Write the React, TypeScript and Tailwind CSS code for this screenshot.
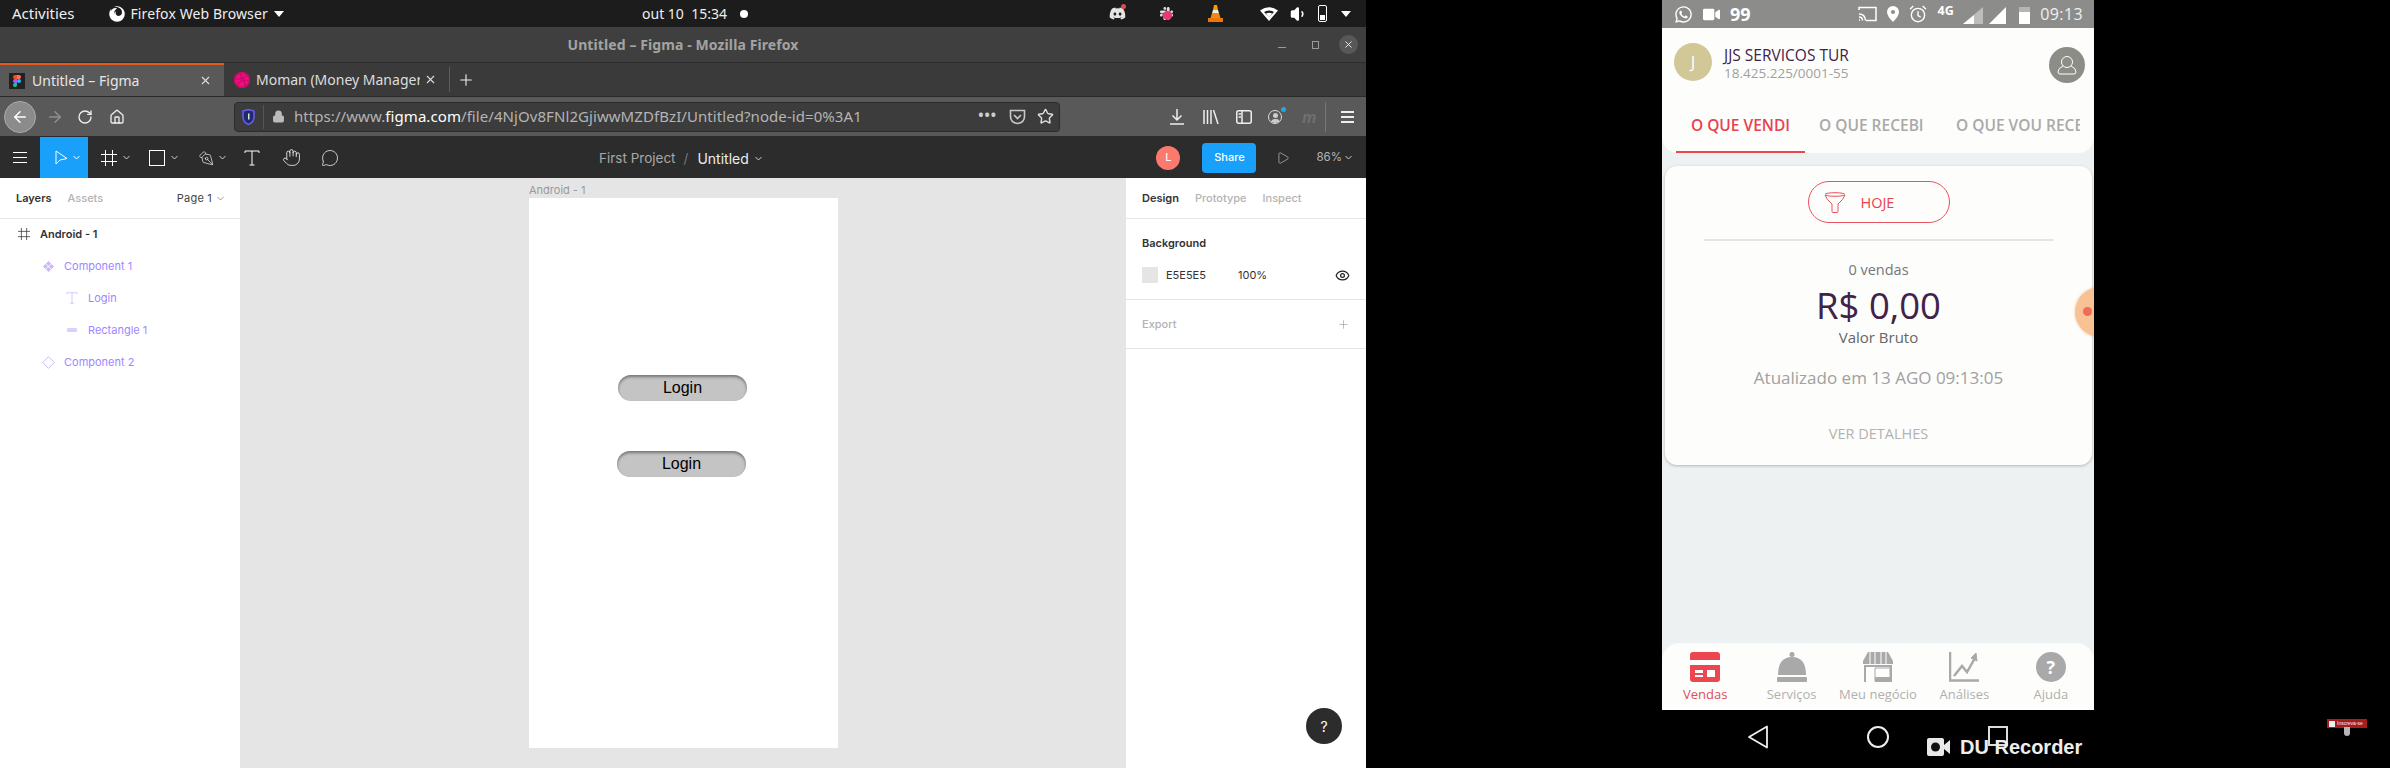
import React from "react";
import { ArrowLeft, ArrowRight, RotateCw, Home, Lock, Star, Hand, MessageCircle, PenTool, X, Plus, Eye, Play, Volume1 } from "lucide-react";
import { FaDiscord, FaSlack, FaFirefox, FaDribbble, FaWhatsapp, FaVideo } from "react-icons/fa";

const FrameIcon = ({ c = "#fff", s = 16 }: { c?: string; s?: number }) => (
  <svg width={s} height={s} viewBox="0 0 16 16" fill="none" stroke={c} strokeWidth="1">
    <path d="M4.5 0v16M11.5 0v16M0 4.5h16M0 11.5h16" />
  </svg>
);
const TIcon = ({ c = "#fff", s = 16 }: { c?: string; s?: number }) => (
  <svg width={s} height={s} viewBox="0 0 16 16" fill="none" stroke={c} strokeWidth="1">
    <path d="M1 3V1h14v2M8 1v14M5.5 15h5" />
  </svg>
);
const Chev = ({ c = "#ccc" }: { c?: string }) => (
  <svg width="7" height="5" viewBox="0 0 7 5" fill="none" stroke={c} strokeWidth="1"><path d="M.5 1 3.5 4l3-3" /></svg>
);
const Tri = () => <span className="block w-0 h-0 border-x-[5px] border-x-transparent border-t-[6px] border-t-white" />;

function TopBar() {
  return (
    <div className="h-[27px] bg-[#1c1c1c] text-[#eeeeee] text-[14px] grid grid-cols-[1fr_auto_1fr] items-center relative">
      <div className="flex items-center pl-3">
        <span className="text-[15px]">Activities</span>
        <FaFirefox className="ml-[34px] text-white" size={16} />
        <span className="ml-[6px] tracking-[0.1px]">Firefox Web Browser</span>
        <span className="ml-[6px]"><Tri /></span>
      </div>
      <div className="flex items-center pl-[24px]">
        <span>out 10&nbsp;&nbsp;15:34</span>
        <span className="ml-[13px] w-2 h-2 rounded-full bg-white" />
      </div>
      <div className="flex items-center justify-end pr-[15px]">
        <span className="relative"><FaDiscord size={17} className="text-[#e4e4e4]" /><span className="absolute -top-[1px] right-0 w-[5px] h-[5px] rounded-full bg-[#e5484d]" /></span>
        <span className="relative ml-[33px]"><FaSlack size={15} className="text-[#dddddd]" /><span className="absolute top-[5px] left-[4px] w-[9px] h-[9px] rounded-full bg-[#f0347a]" /></span>
        <svg className="ml-[34px]" width="15" height="18" viewBox="0 0 15 18">
          <path d="M6 0h3l1 5H5z" fill="#f90" /><path d="M5 5h5l1 3H4z" fill="#eee" /><path d="M4 8h7l1.5 5h-10z" fill="#f58a0b" /><path d="M0 13h15v4H0z" fill="#e9780a" />
        </svg>
        <svg className="ml-[37px]" width="18" height="14" viewBox="0 0 18 14"><path d="M0 3.5Q9-3 18 3.5L9 14z" fill="#fff" /><path d="M4 5q5-3 10 0l-5 5z" fill="#1c1c1c" /><path d="M6 6.5q3-1.5 6 0L9 10.5z" fill="#fff" /></svg>
        <Volume1 className="ml-[12px]" size={18} fill="#fff" color="#fff" />
        <span className="ml-[10px] relative w-[9px] h-[17px] border border-white rounded-[2px] flex items-end p-[1px]"><span className="block w-full h-[5px] bg-white" /></span>
        <span className="ml-[14px]"><Tri /></span>
      </div>
    </div>
  );
}

function TitleBar() {
  return (
    <div className="h-[36px] bg-[#3f3f3f] border-b border-[#2b2b2b] grid grid-cols-[1fr_auto_1fr] items-center">
      <span />
      <span className="text-[14px] font-bold text-[#a3a3a3] tracking-[0.1px]">Untitled – Figma - Mozilla Firefox</span>
      <div className="flex items-center justify-end pr-[8px] text-[#9a9a9a]">
        <span className="block w-2 h-[1px] bg-[#9a9a9a] mt-[5px]" />
        <span className="ml-[26px] block w-[7px] h-[8px] border border-[#9a9a9a]" />
        <span className="ml-[20px] w-[19px] h-[19px] rounded-full bg-[#585858] flex items-center justify-center"><X size={11} color="#eee" /></span>
      </div>
    </div>
  );
}

function Tabs() {
  return (
    <div className="h-[34px] bg-[#3a3a3a] flex items-stretch border-b border-[#2a2a2a] text-[14px]">
      <div className="w-[224px] bg-[#595959] border-t-2 border-[#e55b1f] flex items-center pl-[9px] pr-[12px] text-[#e6e6e6]">
        <span className="w-4 h-4 bg-[#222] flex items-center justify-center">
          <svg width="8" height="12" viewBox="0 0 8 12"><path d="M0 2a2 2 0 0 1 2-2h2v4H2a2 2 0 0 1-2-2z" fill="#f24e1e" /><path d="M4 0h2a2 2 0 0 1 0 4H4z" fill="#ff7262" /><path d="M0 6a2 2 0 0 1 2-2h2v4H2a2 2 0 0 1-2-2z" fill="#a259ff" /><circle cx="6" cy="6" r="2" fill="#1abcfe" /><path d="M0 10a2 2 0 0 1 2-2h2v2a2 2 0 0 1-4 0z" fill="#0acf83" /></svg>
        </span>
        <span className="ml-[7px] flex-1">Untitled – Figma</span>
        <X size={13} color="#ddd" />
      </div>
      <div className="w-[226px] flex items-center pl-[10px] pr-[11px] text-[#dddddd] border-r border-[#5d5d5d] my-1">
        <span className="w-4 h-4 rounded-full bg-[#ee0f7f] shrink-0"><FaDribbble size={16} color="#c40a66" /></span>
        <span className="ml-[6px] w-[164px] overflow-hidden whitespace-nowrap">Moman (Money Manager</span>
        <X size={13} color="#ddd" className="ml-[4px]" />
      </div>
      <Plus size={18} color="#eee" strokeWidth={1.5} className="self-center ml-[7px]" />
    </div>
  );
}

function NavBar() {
  return (
    <div className="h-[40px] bg-[#595959] border-b border-[#2a2a2a] flex items-center">
      <div className="ml-1 w-8 h-8 rounded-full bg-[#8b8b8b] border border-[#aaa] flex items-center justify-center"><ArrowLeft size={18} color="#fff" /></div>
      <ArrowRight size={18} color="#8f8f8f" className="ml-[10px]" />
      <RotateCw size={16} color="#eee" className="ml-[13px]" />
      <Home size={16} color="#eee" className="ml-[16px]" />
      <div className="ml-[109px] w-[826px] h-[30px] bg-[#3c3c3c] rounded-[4px] border border-[#2c2c2c] flex items-center text-[15px] text-[#b4b4b4] tracking-[0.07px]">
        <svg className="ml-[7px]" width="13" height="16" viewBox="0 0 13 16"><path d="M1 2 6.5.5 12 2v6q0 5-5.500 7.500Q1 13 1 8z" fill="#1e2a6e" stroke="#6a5cf0" strokeWidth="1.5" /><path d="M6 4.500h1.500v6H6z" fill="#ddd" /></svg>
        <span className="ml-[8px] w-[1px] h-[24px] bg-[#555]" />
        <Lock size={13} color="#bbb" fill="#bbb" className="ml-[8px]" />
        <span className="ml-[9px] flex-1 whitespace-nowrap overflow-hidden">https://www.<span className="text-white">figma.com</span>/file/4NjOv8FNl2GjiwwMZDfBzI/Untitled?node-id=0%3A1</span>
        <span className="text-[14px] font-bold tracking-[1px] text-[#ccc] mr-[12px] leading-none mb-[4px]">•••</span>
        <svg width="17" height="16" viewBox="0 0 17 16" fill="none" stroke="#c8c8c8" strokeWidth="1.6" className="mr-[11px]"><path d="M1.500 1.500h14v6q0 6-7 7-7-1-7-7z" /><path d="m5 6 3.500 3.500L12 6" /></svg>
        <Star size={17} color="#ddd" className="mr-[5px]" />
      </div>
      <svg className="ml-[110px]" width="14" height="16" viewBox="0 0 14 16" fill="none" stroke="#eee" strokeWidth="1.5"><path d="M7 0v11M2.500 6.500 7 11l4.500-4.500M0 15h14" /></svg>
      <svg className="ml-[19px]" width="16" height="14" viewBox="0 0 16 14" fill="none" stroke="#eee" strokeWidth="1.5"><path d="M1 0v14M4.500 0v14M8 0v14M10.500 0l4.500 14" /></svg>
      <svg className="ml-[17px]" width="16" height="14" viewBox="0 0 16 14" fill="none" stroke="#eee" strokeWidth="1.5"><rect x=".75" y=".75" width="14.5" height="12.5" rx="2" /><path d="M6 1v12M2.500 4H5M2.500 7H5" /></svg>
      <span className="ml-[16px] relative w-[14px] h-[14px] rounded-full border border-[#ddd] flex items-end justify-center overflow-hidden">
        <span className="absolute top-[2px] w-[5px] h-[5px] rounded-full bg-[#ccc]" />
        <span className="block w-[9px] h-[4px] rounded-t-full bg-[#ccc]" />
      </span>
      <span className="relative -top-[7px] -ml-[1px] w-[5px] h-[5px] rounded-full bg-[#20a8e8]" />
      <span className="ml-[16px] w-[12px] text-[16px] italic font-bold text-[#6f6f6f] leading-none">m</span>
      <span className="ml-[11px] w-[1px] h-[30px] bg-[#777]" />
      <span className="ml-[15px] flex flex-col gap-[3px]"><i className="block w-[13px] h-[2px] bg-[#eee]" /><i className="block w-[13px] h-[2px] bg-[#eee]" /><i className="block w-[13px] h-[2px] bg-[#eee]" /></span>
    </div>
  );
}

function FigmaBar() {
  return (
    <div className="h-[41px] bg-[#2c2c2c] flex items-stretch font-['Inter',sans-serif] text-white">
      <div className="w-[40px] flex items-center justify-center"><span className="flex flex-col gap-[4px]"><i className="block w-[14px] h-[1px] bg-white" /><i className="block w-[14px] h-[1px] bg-white" /><i className="block w-[14px] h-[1px] bg-white" /></span></div>
      <div className="w-[48px] bg-[#18a0fb] flex items-center pl-[15px] gap-[5px]">
        <svg width="13" height="15" viewBox="0 0 13 15" fill="none" stroke="#fff"><path d="M1 1v13l4-4 7-1.500z" /></svg><Chev c="#fff" />
      </div>
      <div className="flex items-center ml-[13px] gap-[6px]"><FrameIcon /><Chev /></div>
      <div className="flex items-center ml-[19px] gap-[6px]"><span className="block w-4 h-4 border border-white" /><Chev /></div>
      <div className="flex items-center ml-[20px] gap-[5px]"><PenTool size={16} strokeWidth={1} className="rotate-180" /><Chev /></div>
      <div className="flex items-center ml-[18px]"><TIcon /></div>
      <div className="flex items-center ml-[22px]"><Hand size={19} strokeWidth={1} /></div>
      <div className="flex items-center ml-[20px]"><MessageCircle size={18} strokeWidth={1} /></div>
      <div className="flex items-center ml-[260px] pt-[1px] text-[13.5px] text-[#a8a8a8]">
        <span>First Project</span>
        <span className="ml-[8px] text-[#777]">/</span>
        <span className="ml-[9px] text-[#ececec] text-[14px]">Untitled</span>
        <span className="ml-[6px]"><Chev /></span>
      </div>
      <div className="flex-1 flex items-center justify-end pr-[14px]">
        <span className="w-6 h-6 rounded-full bg-[#fc7a6d] text-[11px] flex items-center justify-center">L</span>
        <span className="ml-[22px] w-[54px] h-[30px] rounded-[4px] bg-[#18a0fb] text-[11px] font-medium flex items-center justify-center">Share</span>
        <Play size={14} strokeWidth={1} color="#ddd" className="ml-[20px]" />
        <span className="ml-[26px] text-[11.5px] text-[#b5b5b5]">86%</span>
        <span className="ml-[3px]"><Chev /></span>
      </div>
    </div>
  );
}

function LayerRow({ icon, label, pad, dark }: { icon: React.ReactNode; label: string; pad: string; dark?: boolean }) {
  return (
    <div className={`h-[32px] flex items-center ${pad}`}>
      <span className="w-4 h-4 flex items-center justify-center">{icon}</span>
      <span className={dark ? "ml-2 font-semibold text-[#333]" : "ml-2 text-[#9f86ff]"}>{label}</span>
    </div>
  );
}

function LeftPanel() {
  return (
    <aside className="w-[240px] bg-white shrink-0 text-[11px] font-['Inter',sans-serif]">
      <div className="h-[41px] border-b border-[#e5e5e5] flex items-center pl-4 pr-[16px]">
        <span className="font-semibold text-[#333]">Layers</span>
        <span className="ml-4 font-medium text-[#b3b3b3]">Assets</span>
        <span className="ml-auto text-[#444] tracking-[0.2px]">Page 1</span>
        <span className="ml-[5px]"><Chev c="#999" /></span>
      </div>
      <div className="-mt-[1px]">
        <LayerRow pad="pl-[16px]" dark label="Android - 1" icon={<FrameIcon c="#333" s={12} />} />
        <LayerRow pad="pl-[40px]" label="Component 1" icon={<svg width="11" height="11" viewBox="0 0 11 11" fill="#cdb5ff"><path d="M5.500 0 8 2.500 5.500 5 3 2.500zM5.500 6 8 8.500 5.500 11 3 8.500zM2.500 3 5 5.500 2.500 8 0 5.500zM8.500 3 11 5.500 8.500 8 6 5.500z" /></svg>} />
        <LayerRow pad="pl-[64px]" label="Login" icon={<TIcon c="#cdb5ff" s={12} />} />
        <LayerRow pad="pl-[64px]" label="Rectangle 1" icon={<span className="block w-[10px] h-[4px] bg-[#dccfff] rounded-[1px]" />} />
        <LayerRow pad="pl-[40px]" label="Component 2" icon={<svg width="13" height="13" viewBox="0 0 13 13" fill="none" stroke="#cdb5ff"><path d="M6.500.7 12.300 6.500 6.500 12.300.7 6.500z" /></svg>} />
      </div>
    </aside>
  );
}

function LoginBtn({ ml }: { ml: string }) {
  return (
    <div className={`${ml} w-[129px] h-[26px] rounded-[13px] bg-[#c4c4c4] shadow-[inset_0_2px_3px_rgba(0,0,0,0.4)] flex items-center justify-center text-[16px] text-black font-['Liberation_Sans',sans-serif]`}>Login</div>
  );
}

function Canvas() {
  return (
    <main className="flex-1 bg-[#e5e5e5] pl-[289px] pt-[6px]">
      <div className="h-[14px] text-[11px] leading-[13px] text-[#9a9a9a] font-['Inter',sans-serif]">Android - 1</div>
      <div className="w-[309px] h-[550px] bg-white pt-[177px]">
        <LoginBtn ml="ml-[89px]" />
        <div className="h-[50px]" />
        <LoginBtn ml="ml-[88px]" />
      </div>
    </main>
  );
}

function RightPanel() {
  return (
    <aside className="w-[240px] bg-white shrink-0 text-[11px] font-['Inter',sans-serif] text-[#333]">
      <div className="h-[41px] border-b border-[#e5e5e5] flex items-center pl-4 gap-4">
        <span className="font-semibold">Design</span>
        <span className="font-medium text-[#b3b3b3]">Prototype</span>
        <span className="font-medium text-[#b3b3b3]">Inspect</span>
      </div>
      <div className="h-[81px] border-b border-[#e5e5e5] pl-4 pr-4">
        <div className="h-[48px] flex items-center font-semibold">Background</div>
        <div className="flex items-center h-4">
          <span className="w-4 h-4 bg-[#e5e5e5]" />
          <span className="ml-2 w-[72px]">E5E5E5</span>
          <span>100%</span>
          <Eye size={15} className="ml-auto" color="#222" />
        </div>
      </div>
      <div className="h-[49px] border-b border-[#e5e5e5] pl-4 pr-4 flex items-center justify-between">
        <span className="font-medium text-[#b3b3b3]">Export</span>
        <Plus size={13} strokeWidth={1} color="#888" />
      </div>
    </aside>
  );
}

function Desktop() {
  return (
    <section className="w-[1366px] h-[768px] shrink-0 flex flex-col font-['Noto_Sans',sans-serif]">
      <TopBar />
      <TitleBar />
      <Tabs />
      <NavBar />
      <FigmaBar />
      <div className="flex-1 flex min-h-0 overflow-hidden relative">
        <LeftPanel />
        <Canvas />
        <RightPanel />
        <div className="absolute right-[24px] bottom-[24px] w-9 h-9 rounded-full bg-[#2c2c2c] text-white text-[14px] flex items-center justify-center font-['Inter',sans-serif]">?</div>
      </div>
    </section>
  );
}

function PhoneStatus() {
  return (
    <div className="h-[28px] bg-[#8c8d8b] flex items-center text-white pl-[12px] pr-[11px]">
      <FaWhatsapp size={19} />
      <FaVideo size={17} className="ml-[10px]" />
      <span className="ml-[10px] font-bold text-[18px] leading-none">99</span>
      <svg className="ml-[107px]" width="19" height="16" viewBox="0 0 19 16" fill="none" stroke="#fff" strokeWidth="1.5"><path d="M1 4V1.500h17v13H8M1 8q6 0 6.500 6.500M1 11q3.500 0 3.500 3.500M1 14h1" /></svg>
      <svg className="ml-[10px]" width="12" height="16" viewBox="0 0 12 16"><path d="M6 0a6 6 0 0 1 6 6q0 4-6 10Q0 10 0 6a6 6 0 0 1 6-6z" fill="#fff" /><circle cx="6" cy="6" r="2" fill="#8c8d8b" /></svg>
      <svg className="ml-[10px]" width="18" height="18" viewBox="0 0 17 17" fill="none" stroke="#fff" strokeWidth="1.3"><circle cx="8.500" cy="9.500" r="6.300" /><path d="M8.500 6v4l2.500 1.500M1 4l3-3M16 4l-3-3" /></svg>
      <span className="ml-[11px] w-[18px] text-[12.5px] font-bold leading-none -mt-[6px]">4G</span>
      <svg className="ml-[7px] mt-[3px]" width="20" height="17" viewBox="0 0 20 17"><path d="M20 0v17H0z" fill="#bdbdbb" /><path d="M11 8v9H0z" fill="#fff" /></svg>
      <svg className="ml-[6px] mt-[3px]" width="17" height="17" viewBox="0 0 17 17"><path d="M17 0v17H0z" fill="#fff" /></svg>
      <span className="ml-[13px] relative w-[11px] h-[17px] mt-[2px] bg-[#b5b5b3] flex items-end"><span className="block w-full h-[12px] bg-white" /></span>
      <span className="ml-auto text-[16px] tracking-[0.4px] text-[#f0f0f0]">09:13</span>
    </div>
  );
}

function NavItem({ icon, label, active }: { icon: React.ReactNode; label: string; active?: boolean }) {
  return (
    <div className="flex flex-col items-center">
      <div className="h-[30px] flex items-center justify-center">{icon}</div>
      <span className={`mt-[3px] text-[13px] leading-[18px] ${active ? "text-[#df4b58] font-medium" : "text-[#b0b0b0]"}`}>{label}</span>
    </div>
  );
}

function Phone() {
  return (
    <section className="w-[432px] ml-[296px] h-[768px] shrink-0 flex flex-col relative font-['Open_Sans',sans-serif]">
      <PhoneStatus />
      <div className="h-[682px] bg-[#eef1f1] flex flex-col relative overflow-hidden">
        <header className="h-[125px] bg-[#fdfdfc] rounded-b-[16px]">
          <div className="flex items-center h-[70px] pl-[12px] pr-[9px]">
            <span className="w-[38px] h-[38px] rounded-full bg-[#d2c796] text-white text-[17px] flex items-center justify-center -mt-[2px]">J</span>
            <div className="ml-[12px]">
              <div className="text-[15.5px] leading-[20px] text-[#41224a]">JJS SERVICOS TUR</div>
              <div className="text-[13.5px] leading-[17px] text-[#a0a0a0]">18.425.225/0001-55</div>
            </div>
            <span className="ml-auto w-9 h-9 rounded-full bg-[#8c8d86] flex items-center justify-center mt-[4px]">
              <svg width="20" height="20" viewBox="0 0 20 20" fill="none" stroke="#fff" strokeWidth="1"><circle cx="10" cy="7" r="5.5" /><path d="M6 11q-5 2-5 6 0 2 2 2h14q2 0 2-2 0-4-5-6" /></svg>
            </span>
          </div>
          <div className="flex items-stretch h-[55px] pl-[14px] pr-[14px] text-[15.5px] font-semibold text-[#a9a9a9] whitespace-nowrap overflow-hidden">
            <div className="w-[129px] border-b-[2px] border-[#ec4650] text-[#e8424f] flex items-center justify-center pt-[2px]">O QUE VENDI</div>
            <div className="ml-[14px] w-[107px] overflow-hidden flex items-center">O QUE RECEBI</div>
            <div className="ml-[30px] w-[124px] overflow-hidden flex items-center">O QUE VOU RECEBER</div>
          </div>
        </header>
        <div className="mt-[13px] ml-[3px] mr-[2px] h-[299px] bg-[#fdfdfc] rounded-[12px] shadow-[0_1px_3px_rgba(0,0,0,0.25)] flex flex-col items-center">
          <div className="mt-[15px] w-[142px] h-[42px] rounded-full border border-[#e9545f] flex items-center pl-[15px] text-[#e8424f]">
            <svg width="22" height="21" viewBox="0 0 22 21" fill="none" stroke="#e8545f" strokeWidth="1"><ellipse cx="11" cy="2.500" rx="10" ry="1.800" /><path d="M1 3q1 4 7 9v7.500q0 1 1 1h4q1 0 1-1V12q6-5 7-9" /></svg>
            <span className="ml-[15px] text-[14.5px] leading-none mt-[2px]">HOJE</span>
          </div>
          <div className="mt-[16px] w-[350px] h-[2px] bg-[#e3e6e5]" />
          <div className="mt-[18px] text-[14.5px] leading-[22px] text-[#777]">0 vendas</div>
          <div className="text-[36.5px] leading-[46px] text-[#41224a] mt-[1px]">R$ 0,00</div>
          <div className="text-[15px] leading-[20px] text-[#666] -mt-[1px]">Valor Bruto</div>
          <div className="mt-[19px] text-[17px] leading-[24px] text-[#a0a0a0] whitespace-nowrap">Atualizado em 13 AGO 09:13:05</div>
          <div className="mt-[34px] text-[14.5px] leading-[20px] text-[#b2b2b2]">VER DETALHES</div>
        </div>
        <span className="absolute left-[413px] top-[259px] w-[50px] h-[50px] rounded-full bg-[#f9c294] shadow-[0_0_3px_#f9c294]">
          <span className="block w-[9px] h-[9px] rounded-full bg-[#f26b55] ml-[8px] mt-[20px]" />
        </span>
        <nav className="mt-auto h-[67px] bg-[#fdfdfc] rounded-t-[18px] grid grid-cols-5 pt-[9px]">
          <NavItem active label="Vendas" icon={
            <svg width="30" height="30" viewBox="0 0 30 30"><rect width="30" height="30" rx="3" fill="#ec4650" /><path d="M0 8h30v5H0z" fill="#fff" /><path d="M5 18h8v3H5zM5 23h8v2H5zM17 18h8v7h-8z" fill="#fff" /></svg>} />
          <NavItem label="Serviços" icon={
            <svg width="30" height="30" viewBox="0 0 30 30" fill="#a9a9a9"><circle cx="15" cy="2.500" r="2.500" /><path d="M1 23Q1 5 15 5t14 18z" /><rect y="25" width="30" height="5" rx="1" /></svg>} />
          <NavItem label="Meu negócio" icon={
            <svg width="30" height="30" viewBox="0 0 30 30" fill="#a9a9a9"><path d="M5 0h20l5 9v3H0V9z" /><path d="M7 0v12M12 0v12M18 0v12M23 0v12" stroke="#fff" /><path d="M1 13h2v17H1zM3 13h26v17h-2V15H3z" /><path d="M12 16h15v13H12z" fill="none" stroke="#a9a9a9" strokeWidth="1" /><path d="M12 25h15v5H12z" /></svg>} />
          <NavItem label="Análises" icon={
            <svg width="30" height="30" viewBox="0 0 30 30" fill="none" stroke="#a9a9a9" strokeWidth="2.5"><path d="M1 0v28.500h29" /><path d="m5 24 8-10 5 6 8-14" /><path d="m22 6 5-5 1 8z" fill="#a9a9a9" strokeWidth="1" /></svg>} />
          <NavItem label="Ajuda" icon={
            <span className="w-[30px] h-[30px] rounded-full bg-[#a9a9a9] text-white font-bold text-[18px] flex items-center justify-center">?</span>} />
        </nav>
      </div>
      <div className="flex-1 bg-black flex items-center text-white relative">
        <svg className="ml-[85px] mb-[4px]" width="22" height="24" viewBox="0 0 22 24" fill="none" stroke="#eee" strokeWidth="1.8"><path d="M20 1.500v21L2 12z" strokeLinejoin="round" /></svg>
        <span className="ml-[98px] mb-[4px] w-[22px] h-[22px] rounded-full border-2 border-[#eee]" />
        <span className="ml-[99px] mb-[6px] w-[20px] h-[20px] border-2 border-[#ddd]" />
        <div className="absolute left-[265px] top-[27px] flex items-center">
          <svg width="23" height="18" viewBox="0 0 23 18"><rect width="17" height="18" rx="2" fill="#e8e8e8" /><circle cx="8.5" cy="9" r="4.5" fill="#111" /><path d="m17 7 6-5v14l-6-5z" fill="#e8e8e8" /></svg>
          <span className="ml-[10px] text-[20px] font-bold leading-none text-[#eeeeee] font-['Liberation_Sans',sans-serif] whitespace-nowrap">DU Recorder</span>
        </div>
      </div>
    </section>
  );
}

export default function App() {
  return (
    <div className="w-[2390px] h-[768px] bg-black flex overflow-hidden relative">
      <Desktop />
      <Phone />
      <div className="absolute left-[2327px] top-[719px] w-[40px] h-[9px] bg-[#a81c1c] flex items-center pl-[2px] text-[5px] leading-none text-[#eee] font-['Liberation_Sans',sans-serif] whitespace-nowrap">
        <span className="block w-[6px] h-[6px] bg-[#eee] mr-[2px]" />Inscreva-se
      </div>
      <span className="absolute left-[2344px] top-[727px] w-[6px] h-[9px] rounded-b-[3px] bg-[#b5b5b5]" />
    </div>
  );
}
